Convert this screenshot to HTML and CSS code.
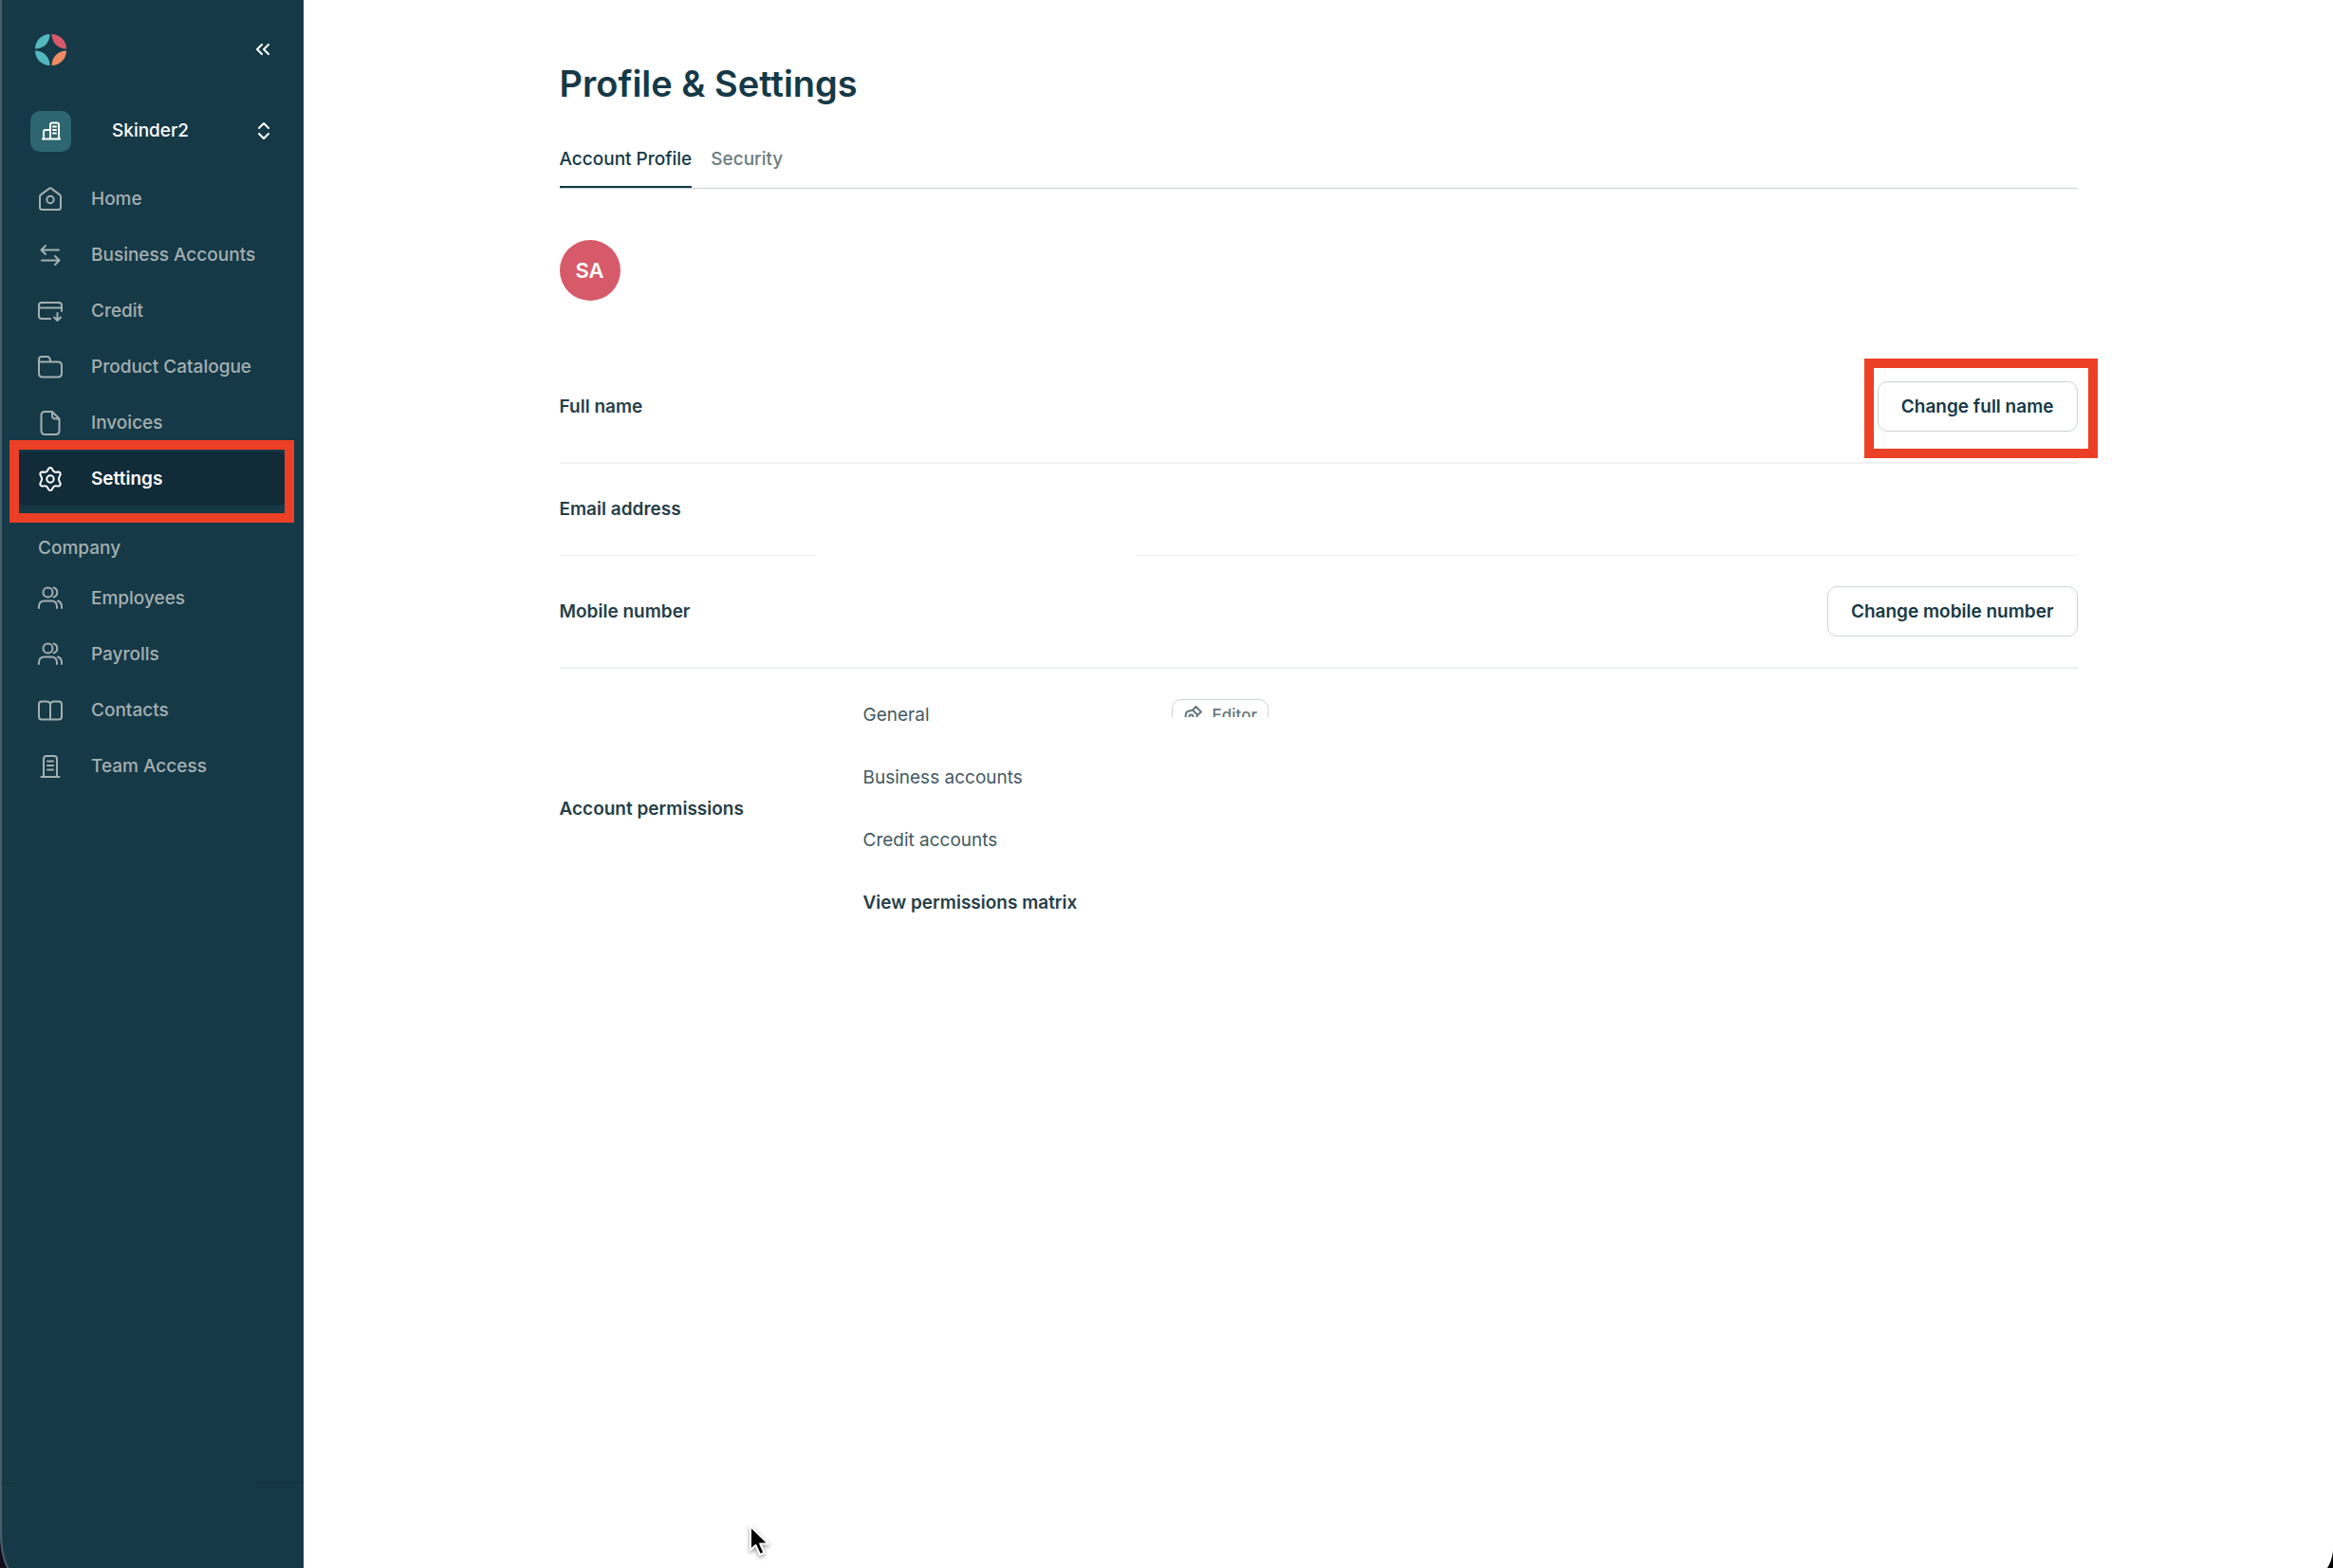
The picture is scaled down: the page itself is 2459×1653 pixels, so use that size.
FILE: index.html
```html
<!DOCTYPE html>
<html lang="en">
<head>
<meta charset="UTF-8">
<meta name="viewport" content="width=device-width, initial-scale=1">
<title>Profile &amp; Settings</title>
<link rel="stylesheet" href="styles.css">
</head>
<body>
<div class="app">
<aside class="sidebar">
    <div class="brand">
        <a href="#" class="logo" aria-label="Dashboard">
            <svg width="33" height="33" viewBox="0 0 33 33">
                <path fill="#54b9bf" d="M15.500 0C15.500 9 9 15.500 0 15.500C0 7 7 0 15.500 0z"/>
                <path fill="#d65a69" d="M17.500 0C17.500 9 24 15.500 33 15.500C33 7 26 0 17.500 0z"/>
                <path fill="#54b9bf" d="M15.500 33C15.500 24 9 17.500 0 17.500C0 26 7 33 15.500 33z"/>
                <path fill="#f08a62" d="M17.500 33C17.500 24 24 17.500 33 17.500C33 26 26 33 17.500 33z"/>
            </svg>
        </a>
        <button class="collapse" aria-label="Collapse menu">
            <svg width="14" height="12" viewBox="0 0 14 12"><path d="M6 1L1 6l5 5M13 1L8 6l5 5"/></svg>
        </button>
    </div>
    <button class="workspace">
        <span class="workspace-icon">
            <svg width="20" height="20" viewBox="0 0 20 20"><path d="M.8 18.500h18.400M2 18.500V11q0-2 2-2h5M9 18.500V3.500q0-2 2-2h5q2 0 2 2v15M12 5.500h3M12 9h3M12 12.500h3"/></svg>
        </span>
        <span class="workspace-name">Skinder2</span>
        <svg class="caret" width="12" height="18" viewBox="0 0 12 18"><path d="M1 6l5-5 5 5M1 12l5 5 5-5"/></svg>
    </button>
    <nav>
        <ul class="menu">
            <li><a href="#"><svg viewBox="0 0 26 26"><path d="M2 10.500q0-1.500 1.200-2.400L12 1.600q1-.7 2 0l8.800 6.500Q24 9 24 10.500V21.500q0 2.500-2.500 2.500h-17Q2 24 2 21.500z"/><circle cx="13" cy="13.500" r="3.700"/></svg>Home</a></li>
            <li><a href="#"><svg viewBox="0 0 26 26"><path d="M22 7.500H4M8 3L3.500 7.500 8 12M4 18.500h18M18 14l4.500 4.500L18 23"/></svg>Business Accounts</a></li>
            <li><a href="#"><svg viewBox="0 0 26 26"><path d="M13 21H4q-3 0-3-3V7q0-3 3-3h18q3 0 3 3v6M1 9.500h24M20.500 15v7.500M17 19.500l3.500 3.500 3.500-3.500"/></svg>Credit</a></li>
            <li><a href="#"><svg viewBox="0 0 26 26"><path d="M1 7.500h20q4 0 4 4v8q0 4-4 4H5q-4 0-4-4V5q0-3 3-3h6q1.500 0 2.300 1.500L13.500 7.500"/></svg>Product Catalogue</a></li>
            <li><a href="#"><svg viewBox="0 0 26 26"><path d="M15 1H7.500q-4 0-4 4v16q0 4 4 4h11q4 0 4-4V8.500L15 1v4q0 3.500 3.500 3.500h4"/></svg>Invoices</a></li>
            <li class="active"><a href="#"><svg viewBox="0 0 26 26"><path d="M11.400 1.800q1.600-1.600 3.200 0l1.600 2.700q.8 1.300 2.300 1.200l3.300-.1q2.300.5 1.800 2.800l-1.300 2.900q-.8 1.700 0 3.400l1.300 2.900q.5 2.300-1.800 2.800l-3.300-.1q-1.500-.1-2.300 1.200l-1.600 2.700q-1.600 1.600-3.200 0l-1.600-2.700q-.8-1.300-2.300-1.200l-3.300.1q-2.300-.5-1.800-2.800l1.300-2.900q.8-1.700 0-3.400L2.400 8.400q-.5-2.300 1.800-2.800l3.300.1q1.500.1 2.300-1.200z"/><circle cx="13" cy="13" r="3.700"/></svg>Settings</a></li>
        </ul>
        <h2 class="menu-title">Company</h2>
        <ul class="menu">
            <li><a href="#"><svg viewBox="0 0 26 26"><circle cx="10.500" cy="6.500" r="5"/><path d="M1 23v-1.500q0-6 6-6h7q6 0 6 6V23M16.500 1.500c5 1.500 5 8.500 0 10M21 15.500q4 1.500 4 6V23"/></svg>Employees</a></li>
            <li><a href="#"><svg viewBox="0 0 26 26"><circle cx="10.500" cy="6.500" r="5"/><path d="M1 23v-1.500q0-6 6-6h7q6 0 6 6V23M16.500 1.500c5 1.500 5 8.500 0 10M21 15.500q4 1.500 4 6V23"/></svg>Payrolls</a></li>
            <li><a href="#"><svg viewBox="0 0 26 26"><path d="M13 22.500V7q0-3.500-4-3.500H4q-3 0-3 3v13q0 3 3 3h18q3 0 3-3v-13q0-3-3-3h-5q-4 0-4 3.500"/></svg>Contacts</a></li>
            <li><a href="#"><svg viewBox="0 0 26 26"><path d="M3.500 24h19M6 24V5q0-3 3-3h8q3 0 3 3v19M10 7.500h6M10 12h6M10 16.500h6"/></svg>Team Access</a></li>
        </ul>
    </nav>
    <div class="sidebar-foot"></div>
    <div class="callout callout-menu"></div>
</aside>

<main>
    <div class="content">
        <h1>Profile &amp; Settings</h1>
        <div class="tabs">
            <a href="#" class="tab current">Account Profile</a>
            <a href="#" class="tab">Security</a>
        </div>
        <div class="avatar">SA</div>

        <section class="row">
            <h3>Full name</h3>
            <div class="action">
                <button class="btn">Change full name</button>
                <div class="callout callout-button"></div>
            </div>
        </section>
        <section class="row row-email">
            <h3>Email address</h3>
            <div class="hidden-value"></div>
        </section>
        <section class="row">
            <h3>Mobile number</h3>
            <button class="btn">Change mobile number</button>
        </section>
        <section class="row permissions">
            <h3>Account permissions</h3>
            <ul>
                <li>
                    <span>General</span>
                    <div class="badge-clip">
                        <div class="badge">
                            <svg width="20" height="20" viewBox="0 0 20 20"><path d="M1.500 18.500L3 8.500q.4-2 2-2.500l5-1.500 5 5-1.300 5q-.5 1.600-2 2zL7 13M10 4.500L13.500 1l5.500 5.500-4 3.500"/><circle cx="8.500" cy="11.500" r="2"/></svg>
                            Editor
                        </div>
                    </div>
                </li>
                <li><span>Business accounts</span></li>
                <li><span>Credit accounts</span></li>
                <li><a href="#">View permissions matrix</a></li>
            </ul>
        </section>
    </div>
</main>

<!-- rounded window corners -->
<svg class="corner corner-left" width="10" height="40" viewBox="0 0 10 40"><path fill="#150a18" d="M0 0Q0 28 8 40H0z"/><path fill="none" stroke="#455f6b" d="M1 0Q1 28 9 41"/></svg>
<svg class="corner corner-right" width="6" height="18" viewBox="0 0 6 18"><path fill="#000" d="M6 0Q5 10 0 18H6z"/></svg>
<svg class="pointer" width="26" height="36" viewBox="0 0 26 36"><path d="M3 3v25l5.500-5 4.500 10 4.500-2-4.300-9.500H22z"/></svg>
</div>
</body>
</html>
```

FILE: styles.css
```css
*{margin:0;padding:0;box-sizing:border-box}
body{font-family:Inter,"Liberation Sans",sans-serif;font-size:19px;line-height:28px;color:#153947;background:#fff;}
ul{list-style:none}
a{color:inherit;text-decoration:none}
button{font:inherit;color:inherit;background:none;border:0;cursor:pointer}
svg{display:block;fill:none;stroke:currentColor;stroke-width:2;stroke-linecap:round;stroke-linejoin:round}
.app{position:relative;display:flex;min-height:100vh}

/* sidebar */
.sidebar{position:relative;display:flex;flex-direction:column;width:320px;flex-shrink:0;padding:32px 16px 0 14px;background:#153947;border-left:2px solid #455f6b;color:#a5afb0;font-weight:500}
.brand{display:flex;align-items:center;justify-content:space-between;height:40px;padding:0 20px 0 21px;color:#fff}
.logo svg{stroke:none}
.workspace{display:flex;align-items:center;height:44px;margin:44px 0 21px;padding:0 20px 0 16px;color:#fff;font-weight:500;text-align:left}
.workspace-icon{display:flex;align-items:center;justify-content:center;width:43px;height:43px;border-radius:10px;background:#2d6670}
.workspace-name{flex:1;padding-left:43px}
.menu a{display:flex;align-items:center;gap:30px;height:57px;margin-bottom:2px;padding:0 24px;border-radius:12px}
.menu svg{width:26px;height:26px;flex-shrink:0}
.menu .active a{background:#112b39;color:#fff;font-weight:600}
.menu-title{margin:31px 0 10px;padding-left:24px;font-size:19px;font-weight:500}
.sidebar-foot{position:relative;height:90px;margin:auto -16px 0 -14px;border-top:1px solid #122f3a}
.sidebar-foot::before{content:"";position:absolute;top:-1px;left:14px;right:51px;height:1px;background:#153947}

/* highlight frames */
.callout{position:absolute;border:10px solid #eb4026;pointer-events:none}
.callout-menu{top:464px;left:8px;width:300px;height:87px}
.callout-button{top:-24px;right:-21px;bottom:-28px;left:-14px}

/* page */
main{flex:1;padding:56px 40px}
.content{max-width:1600px;margin:0 auto}
h1{font-size:38px;line-height:64px;font-weight:600}
.tabs{display:flex;gap:20px;margin-top:24px;border-bottom:1px solid #c9d1d1}
.tab{padding:10px 0 14px;border-bottom:2px solid transparent;color:#6c7c80;font-weight:500}
.current{color:#153947;border-color:#153947}
.avatar{display:flex;align-items:center;justify-content:center;width:64px;height:64px;margin:54px 0 53px;border-radius:50%;background:#d65a69;color:#fff;font-size:22px;font-weight:600}
.row{position:relative;display:flex;align-items:center;justify-content:space-between;padding:32px 0;border-bottom:2px solid #edf1f1}
h3{width:320px;font-size:19px;font-weight:600;color:#263e47}
.btn{height:53px;padding:0 24px;border:1px solid #cdd4d4;border-radius:10px;background:#fff;font-weight:600}
.action{position:relative}
.row-email{padding:34px 0;border-width:1px}
.hidden-value{position:absolute;left:270px;bottom:-1px;width:338px;height:60px;background:#fff}
.permissions{justify-content:flex-start;padding:16px 0;border:0}
.permissions li{display:flex;align-items:center;height:66px;color:#435a62}
.permissions span{width:325px}
.permissions a{color:#263e47;font-weight:600}
.badge-clip{align-self:flex-start;height:19px;margin-top:16px;overflow:hidden}
.badge{display:flex;align-items:center;gap:11px;height:34px;padding:0 11px;border:1px solid #cdd4d4;border-radius:10px;color:#66777b;font-size:17px;font-weight:500}

.corner{position:absolute;bottom:0;stroke:none}
.corner-left{left:0}
.corner-right{right:0}
.pointer{position:absolute;top:1606px;left:788px;fill:#000;stroke:#fff;filter:drop-shadow(0 2px 2px rgba(0,0,0,.4))}
```
